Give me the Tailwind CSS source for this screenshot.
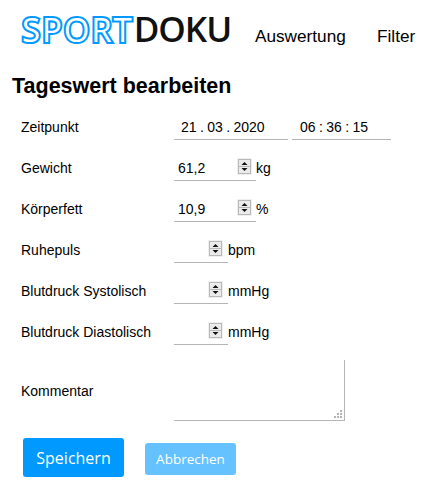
<!DOCTYPE html>
<html lang="de">
<head>
<meta charset="utf-8">
<script src="https://cdn.jsdelivr.net/npm/@tailwindcss/browser@4"></script>
</head>
<body class="bg-white text-black font-['Liberation_Sans',Arial,sans-serif] w-[430px] h-[490px] overflow-hidden">
<header class="flex items-center h-[62px] pl-[21px] pt-[8px]">
  <div class="w-[234px] mb-[14px] text-[35px] font-['Open_Sans',sans-serif] font-semibold leading-none whitespace-nowrap"><span class="pl-[1px] text-[33px] font-normal tracking-[1.9px] text-white [-webkit-text-stroke:4.2px_#0099ff] [paint-order:stroke_fill]">SPORT</span><span class="tracking-[-1px] text-[#111]">DOKU</span></div>
  <nav class="flex text-[17.2px] pt-[4px]">
    <a class="w-[122px]">Auswertung</a>
    <a>Filter</a>
  </nav>
</header>
<h1 class="pl-[12px] mt-[10px] text-[21.5px] leading-[28px] font-bold">Tageswert bearbeiten</h1>
<form class="pl-[21px] mt-[7px] flex flex-col text-[14px]">
  <div class="flex items-center h-[41px]">
    <label class="w-[153px]">Zeitpunkt</label>
    <input value="21 . 03 . 2020" class="w-[114px] h-[25px] pl-[7px] border-b border-[#b5b5b5] text-[14px] [word-spacing:-0.5px] outline-none">
    <input value="06 : 36 : 15" class="ml-[4px] w-[99px] h-[25px] pl-[8px] border-b border-[#b5b5b5] text-[14px] [word-spacing:-0.5px] outline-none">
  </div>
  <div class="flex items-center h-[41px]">
    <label class="w-[153px]">Gewicht</label>
    <div class="flex items-center w-[82px] h-[25px] border-b border-[#b5b5b5] pl-[4px] pr-[4px]">
      <input value="61,2" class="w-[50px] text-[14px] outline-none">
      <svg class="ml-auto mb-[3px]" width="15" height="17" viewBox="0 0 15 17"><rect width="15" height="17" fill="#f0f0f0"/><rect x="1.5" y="1.5" width="12" height="14" fill="#ebebeb" stroke="#b8b8b8"/><path d="M1 8.5H14" stroke="#b8b8b8"/><path d="M7.5 4 10.5 7H4.5Z" fill="#111"/><path d="M7.5 13 10.5 10H4.5Z" fill="#111"/></svg>
    </div>
    <span>kg</span>
  </div>
  <div class="flex items-center h-[41px]">
    <label class="w-[153px]">Körperfett</label>
    <div class="flex items-center w-[82px] h-[25px] border-b border-[#b5b5b5] pl-[4px] pr-[4px]">
      <input value="10,9" class="w-[50px] text-[14px] outline-none">
      <svg class="ml-auto mb-[3px]" width="15" height="17" viewBox="0 0 15 17"><rect width="15" height="17" fill="#f0f0f0"/><rect x="1.5" y="1.5" width="12" height="14" fill="#ebebeb" stroke="#b8b8b8"/><path d="M1 8.5H14" stroke="#b8b8b8"/><path d="M7.5 4 10.5 7H4.5Z" fill="#111"/><path d="M7.5 13 10.5 10H4.5Z" fill="#111"/></svg>
    </div>
    <span>%</span>
  </div>
  <div class="flex items-center h-[41px]">
    <label class="w-[153px]">Ruhepuls</label>
    <div class="flex items-center justify-end w-[54px] h-[25px] border-b border-[#b5b5b5] pr-[5px]">
      <svg class="mb-[3px]" width="15" height="17" viewBox="0 0 15 17"><rect width="15" height="17" fill="#f0f0f0"/><rect x="1.5" y="1.5" width="12" height="14" fill="#ebebeb" stroke="#b8b8b8"/><path d="M1 8.5H14" stroke="#b8b8b8"/><path d="M7.5 4 10.5 7H4.5Z" fill="#111"/><path d="M7.5 13 10.5 10H4.5Z" fill="#111"/></svg>
    </div>
    <span>bpm</span>
  </div>
  <div class="flex items-center h-[41px]">
    <label class="w-[153px]">Blutdruck Systolisch</label>
    <div class="flex items-center justify-end w-[54px] h-[25px] border-b border-[#b5b5b5] pr-[5px]">
      <svg class="mb-[3px]" width="15" height="17" viewBox="0 0 15 17"><rect width="15" height="17" fill="#f0f0f0"/><rect x="1.5" y="1.5" width="12" height="14" fill="#ebebeb" stroke="#b8b8b8"/><path d="M1 8.5H14" stroke="#b8b8b8"/><path d="M7.5 4 10.5 7H4.5Z" fill="#111"/><path d="M7.5 13 10.5 10H4.5Z" fill="#111"/></svg>
    </div>
    <span>mmHg</span>
  </div>
  <div class="flex items-center h-[41px]">
    <label class="w-[153px]">Blutdruck Diastolisch</label>
    <div class="flex items-center justify-end w-[54px] h-[25px] border-b border-[#b5b5b5] pr-[5px]">
      <svg class="mb-[3px]" width="15" height="17" viewBox="0 0 15 17"><rect width="15" height="17" fill="#f0f0f0"/><rect x="1.5" y="1.5" width="12" height="14" fill="#ebebeb" stroke="#b8b8b8"/><path d="M1 8.5H14" stroke="#b8b8b8"/><path d="M7.5 4 10.5 7H4.5Z" fill="#111"/><path d="M7.5 13 10.5 10H4.5Z" fill="#111"/></svg>
    </div>
    <span>mmHg</span>
  </div>
  <div class="flex items-center mt-[7px] h-[61px]">
    <label class="w-[153px] pt-[2px]">Kommentar</label>
    <div class="relative w-[171px] h-[61px] border-b border-r border-[#b5b5b5]">
      <svg class="absolute right-[2px] bottom-[2px]" width="8" height="8" viewBox="0 0 8 8" fill="#b5b5b5"><rect x="6" y="0" width="2" height="2"/><rect x="3" y="3" width="2" height="2"/><rect x="6" y="3" width="2" height="2"/><rect x="0" y="6" width="2" height="2"/><rect x="3" y="6" width="2" height="2"/><rect x="6" y="6" width="2" height="2"/></svg>
    </div>
  </div>
  <div class="flex items-start mt-[17px] pl-[2px] gap-[21px] h-[39px] font-['Open_Sans',sans-serif]">
    <button type="button" class="w-[101px] h-[39px] rounded-[3px] bg-[#0099ff] text-white text-[16px]">Speichern</button>
    <button type="button" class="mt-[5px] w-[91px] h-[32px] rounded-[3px] bg-[#66c2ff] text-white text-[13.5px]">Abbrechen</button>
  </div>
</form>
</body>
</html>
